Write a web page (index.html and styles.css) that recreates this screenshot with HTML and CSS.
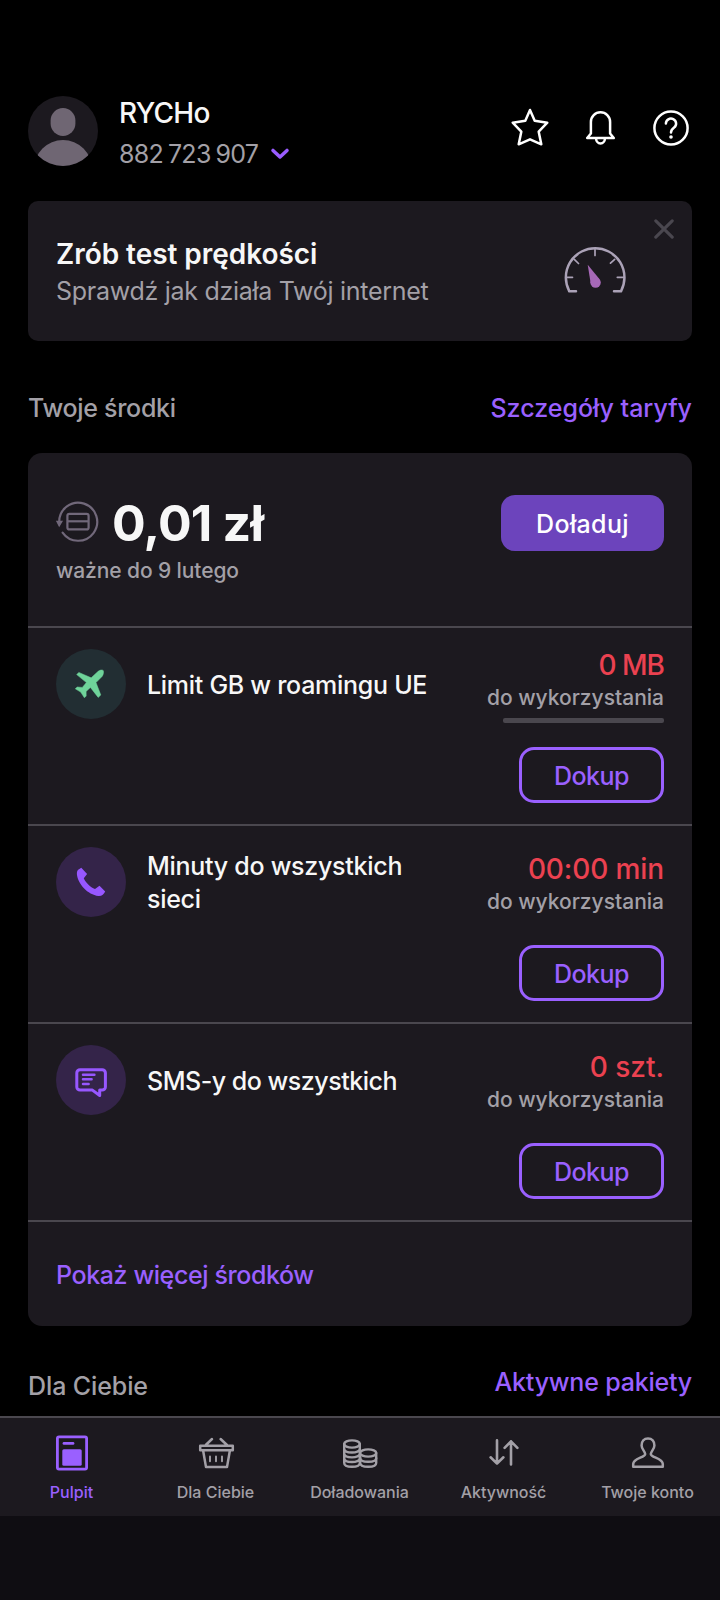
FILE: index.html
```html
<!DOCTYPE html>
<html lang="pl">
<head>
<meta charset="utf-8">
<title>Pulpit</title>
<link rel="stylesheet" href="styles.css">
</head>
<body>
<div class="screen">
  <main class="content">
    <header class="header">
      <svg class="avatar" viewBox="0 0 70 70">
        <defs><clipPath id="face"><circle cx="35" cy="35" r="35"/></clipPath></defs>
        <circle cx="35" cy="35" r="35" fill="#1c191f"/>
        <g clip-path="url(#face)" fill="#6f6673">
          <rect x="22.6" y="12" width="24.8" height="28" rx="12.4"/>
          <circle cx="35" cy="73" r="29"/>
        </g>
      </svg>
      <div class="who">
        <div class="name">RYCHo</div>
        <div class="phone"><span class="number">882 723 907</span>
          <svg width="20" height="14" viewBox="0 0 20 14"><path d="M3 3.4 10 10 17 3.4" fill="none" stroke="#9a5cff" stroke-width="3.5" stroke-linecap="round" stroke-linejoin="round"/></svg>
        </div>
      </div>
      <div class="actions">
        <svg width="40" height="40" viewBox="0 0 40 40"><path d="M20 3 24.7 13.7 37.3 15.7 28.7 24.7 31.3 37.3 20 32.3 8.7 37.3 11.3 24.7 2.7 15.7 15.3 13.7Z"/></svg>
        <svg width="40" height="40" viewBox="1 0 40 40"><path d="M10.9 26.5V14.9a9.6 9.6 0 0 1 19.2 0V26.5L33.8 31H7.2Z"/><path d="M16.1 31.5a4.4 5 0 0 0 8.8 0"/></svg>
        <svg class="help" width="40" height="40" viewBox="0 0 40 40"><circle cx="20" cy="20" r="16.6"/><path d="M14.9 15.6a5.1 5 0 1 1 8.2 4C21 21.2 20 22.2 20 24.6"/><circle class="dot" cx="20" cy="29" r="1.8"/></svg>
      </div>
    </header>

    <section class="promo">
      <div>
        <div class="promo-title">Zrób test prędkości</div>
        <div class="promo-text">Sprawdź jak działa Twój internet</div>
      </div>
      <svg class="gauge" width="64" height="50" viewBox="0 0 64 50">
        <g fill="none" stroke="#aba2b7" stroke-linecap="round" stroke-linejoin="round">
          <path d="M12 45.3H5.3A29.3 29.3 0 1 1 57 45.3H50" stroke-width="2.5"/>
          <path d="M31 3.5V9.5M2.5 31.3H8.5M53.3 31.3H59.5M10.3 13.3 14.5 17.5M50.7 13.3 46.5 17.2" stroke-width="1.7"/>
        </g>
        <path d="M23.7 18.7 26.7 37.5 35.8 33.5Z" fill="#a668b7"/><circle cx="31.6" cy="36.6" r="5.2" fill="#a668b7"/>
      </svg>
      <svg class="close" width="20" height="20" viewBox="0 0 20 20"><path d="M1.8 1.8 18.2 18.2M18.2 1.8 1.8 18.2" stroke="#4a474f" stroke-width="3.1" stroke-linecap="round"/></svg>
    </section>

    <div class="section-head funds-head"><h2 class="funds-title">Twoje środki</h2><a class="tariff">Szczegóły taryfy</a></div>

    <section class="funds">
      <div class="balance">
        <div>
          <div class="amount-line">
            <svg width="44" height="44" viewBox="0 0 44 44" fill="none" stroke="#71687a" stroke-width="2.2">
              <path d="M3.2 22A19 19 0 1 1 6.6 32.6" stroke-linecap="round"/>
              <path d="M.8 21.3H6L3.2 26Z" fill="#71687a" stroke-width="1.2"/>
              <rect x="11.4" y="13.8" width="21.2" height="15.6" rx="2"/><path d="M11.4 21.3H32.6"/>
            </svg>
            <span class="amount">0,01 zł</span>
          </div>
          <div class="valid">ważne do 9 lutego</div>
        </div>
        <button class="topup"><span>Doładuj</span></button>
      </div>

      <div class="row">
        <svg class="badge" viewBox="0 0 70 70"><circle cx="35" cy="35" r="35" fill="#222e33"/>
          <path fill="#6fd39a" stroke="#6fd39a" stroke-width=".5" stroke-linejoin="round" d="M47.2 21.5C46.4 20.6 43.5 20.8 41.4 23L35.2 28.8 22.8 23.4 20.7 25.6 30.4 33.6 26.3 38.4 21.2 38 19.3 39.8 24.7 43.1 28.4 48.8 30.2 47 30.1 42.5 34.4 38.4 42.2 48.4 44.8 46 40 33.6 46.1 27.4C47.5 25.7 47.9 22.5 47.2 21.5Z"/></svg>
        <div class="label roaming">Limit GB w roamingu UE</div>
        <div class="usage with-bar">
          <div class="value mb">0 MB</div><div class="note">do wykorzystania</div><div class="bar"></div>
          <button class="buy"><span>Dokup</span></button>
        </div>
      </div>

      <div class="row">
        <svg class="badge" viewBox="0 0 70 70"><circle cx="35" cy="35" r="35" fill="#342449"/>
          <path fill="#9757ff" d="M22.2 22.8 25.3 20.8 31.1 26.9 27.8 31.2C29.6 35.5 34.2 40.2 39 42L43.5 38.8 49.2 44.4C47.8 47 46 49.1 42.5 48.9 31.7 47.8 21.8 36.8 20.9 27.2 20.8 25.3 21.2 23.7 22.2 22.8Z"/></svg>
        <div class="label minutes">Minuty do wszystkich sieci</div>
        <div class="usage">
          <div class="value min">00:00 min</div><div class="note">do wykorzystania</div>
          <button class="buy"><span>Dokup</span></button>
        </div>
      </div>

      <div class="row">
        <svg class="badge" viewBox="0 0 70 70"><circle cx="35" cy="35" r="35" fill="#342449"/>
          <g fill="none" stroke="#9757ff" stroke-width="3" stroke-linejoin="round" stroke-linecap="round">
            <path d="M24 24.7H46.2A3.2 3.2 0 0 1 49.4 27.9V41.9A3.2 3.2 0 0 1 46.2 45.1H43.7V50.5L36.4 45.1H24A3.2 3.2 0 0 1 20.8 41.9V27.9A3.2 3.2 0 0 1 24 24.7Z"/>
            <path d="M27 29.8H38.4M27 34.3H35.6M27 38.9H32.6" stroke-width="2.5"/>
          </g></svg>
        <div class="label sms">SMS-y do wszystkich</div>
        <div class="usage">
          <div class="value szt">0 szt.</div><div class="note">do wykorzystania</div>
          <button class="buy"><span>Dokup</span></button>
        </div>
      </div>

      <div class="more"><a>Pokaż więcej środków</a></div>
    </section>

    <div class="section-head offers-head"><h2 class="offers-title">Dla Ciebie</h2><a class="packages">Aktywne pakiety</a></div>
  </main>

  <nav class="tabs">
    <div class="tab active">
      <svg width="40" height="40" viewBox="0 0 40 40"><rect x="5.4" y="3.8" width="29.2" height="32.4" rx="1.6" stroke-width="2.8"/><path d="M12 10.4H21" stroke-width="2.8"/><rect x="10.3" y="16.2" width="19.4" height="16.6" rx="1.6" fill="currentColor" stroke="none"/></svg>
      <span>Pulpit</span>
    </div>
    <div class="tab">
      <svg width="40" height="40" viewBox="0 0 40 40" stroke-width="2.5"><path d="M4.2 12.8H36.8V17.2H4.2ZM7.2 18 10 34.1H31L33.8 18M9.8 12 16 6M31 12 24.6 6"/><path d="M14 23.5V28.3M20 23.5V28.3M26 23.5V28.3" stroke-width="1.9"/></svg>
      <span>Dla Ciebie</span>
    </div>
    <div class="tab">
      <svg width="40" height="40" viewBox="0 0 40 40" stroke-width="2.4"><ellipse cx="12" cy="11" rx="7.8" ry="3.6"/><path d="M4.2 11V30C4.2 32.6 8 33.8 12 33.8S19.8 32.6 19.8 30V11M4.2 15.8C4.2 20.8 19.8 20.8 19.8 15.8M4.2 20.6C4.2 25.6 19.8 25.6 19.8 20.6M4.2 25.3C4.2 30.3 19.8 30.3 19.8 25.3"/><path d="M20.2 20V30C20.2 35 36.2 35 36.2 30V20Z" fill="#1c191f"/><ellipse cx="28.2" cy="20" rx="8" ry="3.6" fill="#1c191f"/><path d="M20.2 25.2C20.2 29.9 36.2 29.9 36.2 25.2"/></svg>
      <span>Doładowania</span>
    </div>
    <div class="tab">
      <svg width="40" height="40" viewBox="0 0 40 40" stroke-width="2.6"><path d="M13 7.4V30.5M6.6 24.3 13 30.6 19.4 24.3M27 31.5V8.4M20.6 14.8 27 8.4 33.4 14.8"/></svg>
      <span>Aktywność</span>
    </div>
    <div class="tab">
      <svg width="40" height="40" viewBox="0 0 40 40" stroke-width="2.5"><path d="M20 5.4C16 5.4 13.6 8.4 13.6 12.4 13.6 16 17.2 18.6 17.2 21 17.2 24.6 5.2 25.2 5.2 31V33.8H34.8V31C34.8 25.2 22.8 24.6 22.8 21 22.8 18.6 26.4 16 26.4 12.4 26.4 8.4 24 5.4 20 5.4Z"/></svg>
      <span>Twoje konto</span>
    </div>
  </nav>
  <div class="system-bar"></div>
</div>
</body>
</html>
```

FILE: styles.css
```css
* { box-sizing: border-box; }
body { margin: 0; background: #000; font-family: Inter, Roboto, sans-serif; font-weight: 500; }
h2 { margin: 0; font: inherit; }
button { margin: 0; font: inherit; }
svg { display: block; flex: none; }
.screen { width: 720px; height: 1600px; display: flex; flex-direction: column; overflow: hidden; white-space: nowrap; }
.content { height: 1416px; padding: 96px 28px 0; overflow: hidden; }

.header { display: flex; height: 105px; }
.avatar { width: 70px; height: 70px; }
.who { margin-left: 21px; }
.name { font-size: 28px; line-height: 34px; color: #f7f7f7; letter-spacing: -0.7px; }
.phone { display: flex; align-items: center; gap: 12px; font-size: 25px; line-height: 34px; font-weight: 400; color: #a3a0a7; margin-top: 6px; }
.number { letter-spacing: -0.7px; word-spacing: -1.5px; padding-top: 1px; }
.actions { display: flex; gap: 30.5px; margin: 11px 1px 0 auto; fill: none; stroke: #fff; stroke-width: 2.5; stroke-linejoin: round; stroke-linecap: round; }
.help { margin-top: 1px; }
.dot { fill: #fff; stroke: none; }

.promo { position: relative; height: 140px; padding: 34px 28px 0; display: flex; justify-content: space-between; background: #1c191f; border-radius: 10px; }
.promo-title { font-size: 28px; line-height: 38px; font-weight: 600; color: #f7f7f7; letter-spacing: -0.05px; }
.promo-text { font-size: 25px; line-height: 36px; font-weight: 400; color: #a3a0a7; letter-spacing: -0.28px; }
.gauge { margin: 11px 36px 0 0; }
.close { position: absolute; right: 18px; top: 18px; }

.section-head { display: flex; justify-content: space-between; font-size: 25px; line-height: 34px; color: #a3a0a7; }
.section-head a, .more a { color: #9a60ff; }
.funds-head { height: 112px; padding-top: 50px; }
.funds-title { letter-spacing: -0.3px; }

.funds { height: 873px; background: #1c191f; border-radius: 14px; }
.balance { display: flex; justify-content: space-between; height: 173px; padding: 42px 28px 0; }
.amount-line { display: flex; align-items: flex-start; height: 60px; }
.amount-line svg { margin: 5px 12px 0 0; }
.amount { font-size: 50px; line-height: 56px; font-weight: 700; color: #f7f7f7; letter-spacing: -0.8px; }
.valid { font-size: 21px; line-height: 31px; color: #a3a0a7; letter-spacing: -0.1px; }
.topup { width: 163px; height: 56px; padding: 2px 0 0; border: 0; border-radius: 14px; background: #6c44bc; color: #fff; font-size: 25px; line-height: 54px; letter-spacing: 0.35px; }

.row { display: flex; height: 198px; border-top: 2px solid #4a474e; padding: 21px 28px 0; }
.badge { width: 70px; height: 70px; margin-right: 21px; }
.label { width: 285px; height: 72px; display: flex; align-items: center; font-size: 25px; line-height: 33px; color: #f7f7f7; white-space: normal; letter-spacing: -0.28px; }
.roaming { white-space: nowrap; }
.sms { letter-spacing: -0.48px; }
.usage { flex: 1; display: flex; flex-direction: column; align-items: flex-end; padding-top: 5px; }
.usage.with-bar { padding-top: 0; margin-top: -1px; }
.value { font-size: 28px; line-height: 34px; color: #eb4150; font-weight: 500; }
.min { letter-spacing: -0.1px; }
.mb { letter-spacing: -1px; }
.note { font-size: 21px; line-height: 30px; color: #a3a0a7; margin-top: 1px; }
.bar { width: 161px; height: 5px; border-radius: 2px; background: #4a474e; margin-top: 5px; }
.buy { width: 145px; height: 56px; padding: 2px 0 0; margin-top: 28px; border: 3px solid #9a60ff; border-radius: 15px; background: none; color: #9a60ff; font-size: 25px; line-height: 48px; letter-spacing: -0.5px; }
.with-bar .buy { margin-top: 24px; }
.more { border-top: 2px solid #4a474e; padding: 36px 28px; font-size: 25px; line-height: 34px; letter-spacing: -0.4px; }
.offers-head { padding-top: 39px; }
.offers-title { padding-top: 4px; letter-spacing: -0.1px; }
.packages { letter-spacing: -0.2px; }

.tabs { height: 100px; display: grid; grid-template-columns: repeat(5, 144px); border-top: 2px solid #4a474e; background: #1c191f; color: #a3a0a7; }
.tab { display: flex; flex-direction: column; align-items: center; padding-top: 15px; font-size: 16px; line-height: 24px; }
.tab span { margin: 7px 1px 0 0; }
.tab svg { fill: none; stroke: currentColor; stroke-linecap: round; stroke-linejoin: round; }
.tab.active { color: #9a60ff; }
.system-bar { flex: 1; background: #0f0d12; }
```
